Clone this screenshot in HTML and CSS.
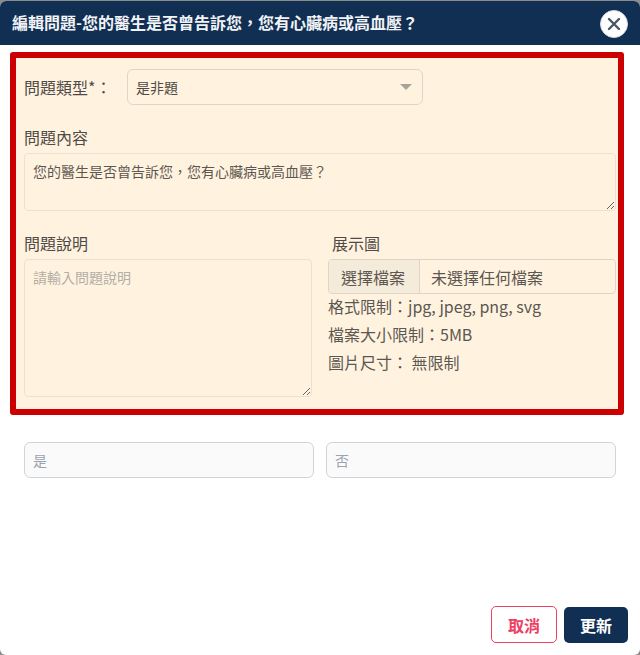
FILE: index.html
```html
<!DOCTYPE html>
<html lang="zh-Hant">
<head>
    <meta charset="UTF-8">
    <meta name="viewport" content="width=device-width, initial-scale=1.0">
    <title>編輯問題</title>
    <link rel="stylesheet" href="styles.css">
</head>
<body>

<div class="modal">
    <div class="modal-header">
        <h2>編輯問題-您的醫生是否曾告訴您，您有心臟病或高血壓？</h2>
        <button class="close-btn" type="button" aria-label="關閉">
            <svg width="14" height="14" viewBox="0 0 14 14"><path d="M2 2L12 12M12 2L2 12" stroke="#4b5563" stroke-width="2.4" stroke-linecap="round"/></svg>
        </button>
    </div>
    <div class="modal-body">
        <div class="highlight-box">
            <div class="type-row">
                <label class="type-label">問題類型*：</label>
                <div class="select-box">
                    <span>是非題</span>
                    <span class="select-arrow"></span>
                </div>
            </div>
            <div class="content-group">
                <label>問題內容</label>
                <textarea class="content-input">您的醫生是否曾告訴您，您有心臟病或高血壓？</textarea>
            </div>
            <div class="detail-row">
                <div class="detail-col">
                    <label>問題說明</label>
                    <textarea class="desc-input" placeholder="請輸入問題說明"></textarea>
                </div>
                <div class="image-col">
                    <label class="image-label">展示圖</label>
                    <div class="file-box">
                        <span class="file-btn">選擇檔案</span>
                        <span class="file-name">未選擇任何檔案</span>
                    </div>
                    <p class="hint first">格式限制：jpg, jpeg, png, svg</p>
                    <p class="hint">檔案大小限制：5MB</p>
                    <p class="hint">圖片尺寸： 無限制</p>
                </div>
            </div>
        </div>
        <div class="answer-row">
            <input class="answer-input" type="text" placeholder="是">
            <input class="answer-input" type="text" placeholder="否">
        </div>
    </div>
    <div class="modal-footer">
        <button class="btn-cancel" type="button">取消</button>
        <button class="btn-save" type="button">更新</button>
    </div>
</div>

</body>
</html>
```

FILE: styles.css
```css
* {
    box-sizing: border-box;
}

html, body {
    height: 100%;
}

body {
    margin: 0;
    padding-top: 1px;
    background-color: #8c8c8c;
    font-family: "Noto Sans CJK TC", "Noto Sans", sans-serif;
    color: #4f4a45;
    overflow: hidden;
}

.modal {
    height: 654px;
    display: flex;
    flex-direction: column;
    background: white;
    border-radius: 6px;
    overflow: hidden;
}

.modal-header {
    height: 44px;
    flex: none;
    display: flex;
    align-items: center;
    justify-content: space-between;
    padding: 0 12px 0 12px;
    background-color: #112f52;
}

.modal-header h2 {
    margin: 0;
    padding-bottom: 2px;
    font-size: 16px;
    font-weight: 700;
    color: #f1f3f6;
    line-height: 1;
}

.close-btn {
    width: 28px;
    height: 28px;
    padding: 0;
    display: flex;
    align-items: center;
    justify-content: center;
    background: white;
    border: 1px solid #d5dbe4;
    border-radius: 50%;
    margin-top: 1px;
}

.modal-body {
    flex: 1;
    padding: 7px 16px 0 10px;
}

.highlight-box {
    height: 363px;
    padding: 11px 2px 0 8px;
    background-color: #fff3e0;
    border: 6px solid #cc0000;
    border-radius: 3px;
}

label {
    display: block;
    font-size: 16px;
    line-height: 20px;
    margin-bottom: 6px;
    color: #4f4a45;
}

.type-row {
    display: flex;
    align-items: center;
    gap: 17px;
}

.type-label {
    width: 86px;
    margin-bottom: 0;
    white-space: nowrap;
}

.select-box {
    width: 296px;
    height: 36px;
    display: flex;
    align-items: center;
    justify-content: space-between;
    padding: 0 10px 0 8px;
    font-size: 14px;
    border: 1px solid #dfd5c6;
    border-radius: 6px;
}

.select-arrow {
    width: 0;
    height: 0;
    border-left: 6px solid transparent;
    border-right: 6px solid transparent;
    border-top: 6px solid #a8a39a;
}

.content-group {
    margin-top: 22px;
}

textarea {
    display: block;
    width: 100%;
    padding: 7px 8px;
    font-family: inherit;
    font-size: 14px;
    line-height: 20px;
    color: #5c5750;
    background: transparent;
    border: 1px solid #ece2d2;
    border-radius: 4px;
    outline: none;
}

textarea::placeholder {
    color: #b3aea6;
}

.content-input {
    height: 58px;
}

.detail-row {
    display: grid;
    grid-template-columns: 288px 288px;
    gap: 16px;
    margin-top: 22px;
}

.desc-input {
    height: 138px;
}

.image-label {
    padding-left: 4px;
}

.file-box {
    height: 35px;
    display: flex;
    align-items: center;
    font-size: 16px;
    color: #5c5750;
    border: 1px solid #dfd5c6;
    border-radius: 4px;
    overflow: hidden;
}

.file-btn {
    height: 100%;
    display: flex;
    align-items: center;
    padding: 0 12px;
    width: 91px;
    background-color: #f5ebdb;
    border-right: 1px solid #dfd5c6;
}

.file-name {
    padding-left: 11px;
}

.hint {
    margin: 8px 0 0;
    font-size: 16px;
    line-height: 20px;
    color: #5c5750;
}

.hint.first {
    margin-top: 2px;
}

.answer-row {
    display: grid;
    grid-template-columns: 290px 290px;
    gap: 12px;
    margin: 27px 0 0 14px;
}

.answer-input {
    width: 100%;
    height: 36px;
    padding: 0 8px;
    font-family: inherit;
    font-size: 14px;
    background-color: #fafafb;
    border: 1px solid #d1d5db;
    border-radius: 6px;
    outline: none;
}

.answer-input::placeholder {
    color: #9ca3af;
}

.modal-footer {
    flex: none;
    display: flex;
    align-items: flex-end;
    justify-content: flex-end;
    gap: 7px;
    padding: 0 12px 12px 0;
}

.modal-footer button {
    height: 37px;
    padding: 0;
    font-family: inherit;
    font-size: 16px;
    font-weight: 700;
    border-radius: 5px;
    cursor: pointer;
}

.btn-cancel {
    width: 66px;
    color: #ec3f63;
    background: white;
    border: 1px solid #ec3f63;
}

.modal-footer .btn-save {
    width: 64px;
    height: 36px;
    color: white;
    background-color: #112f52;
    border: none;
}
```
